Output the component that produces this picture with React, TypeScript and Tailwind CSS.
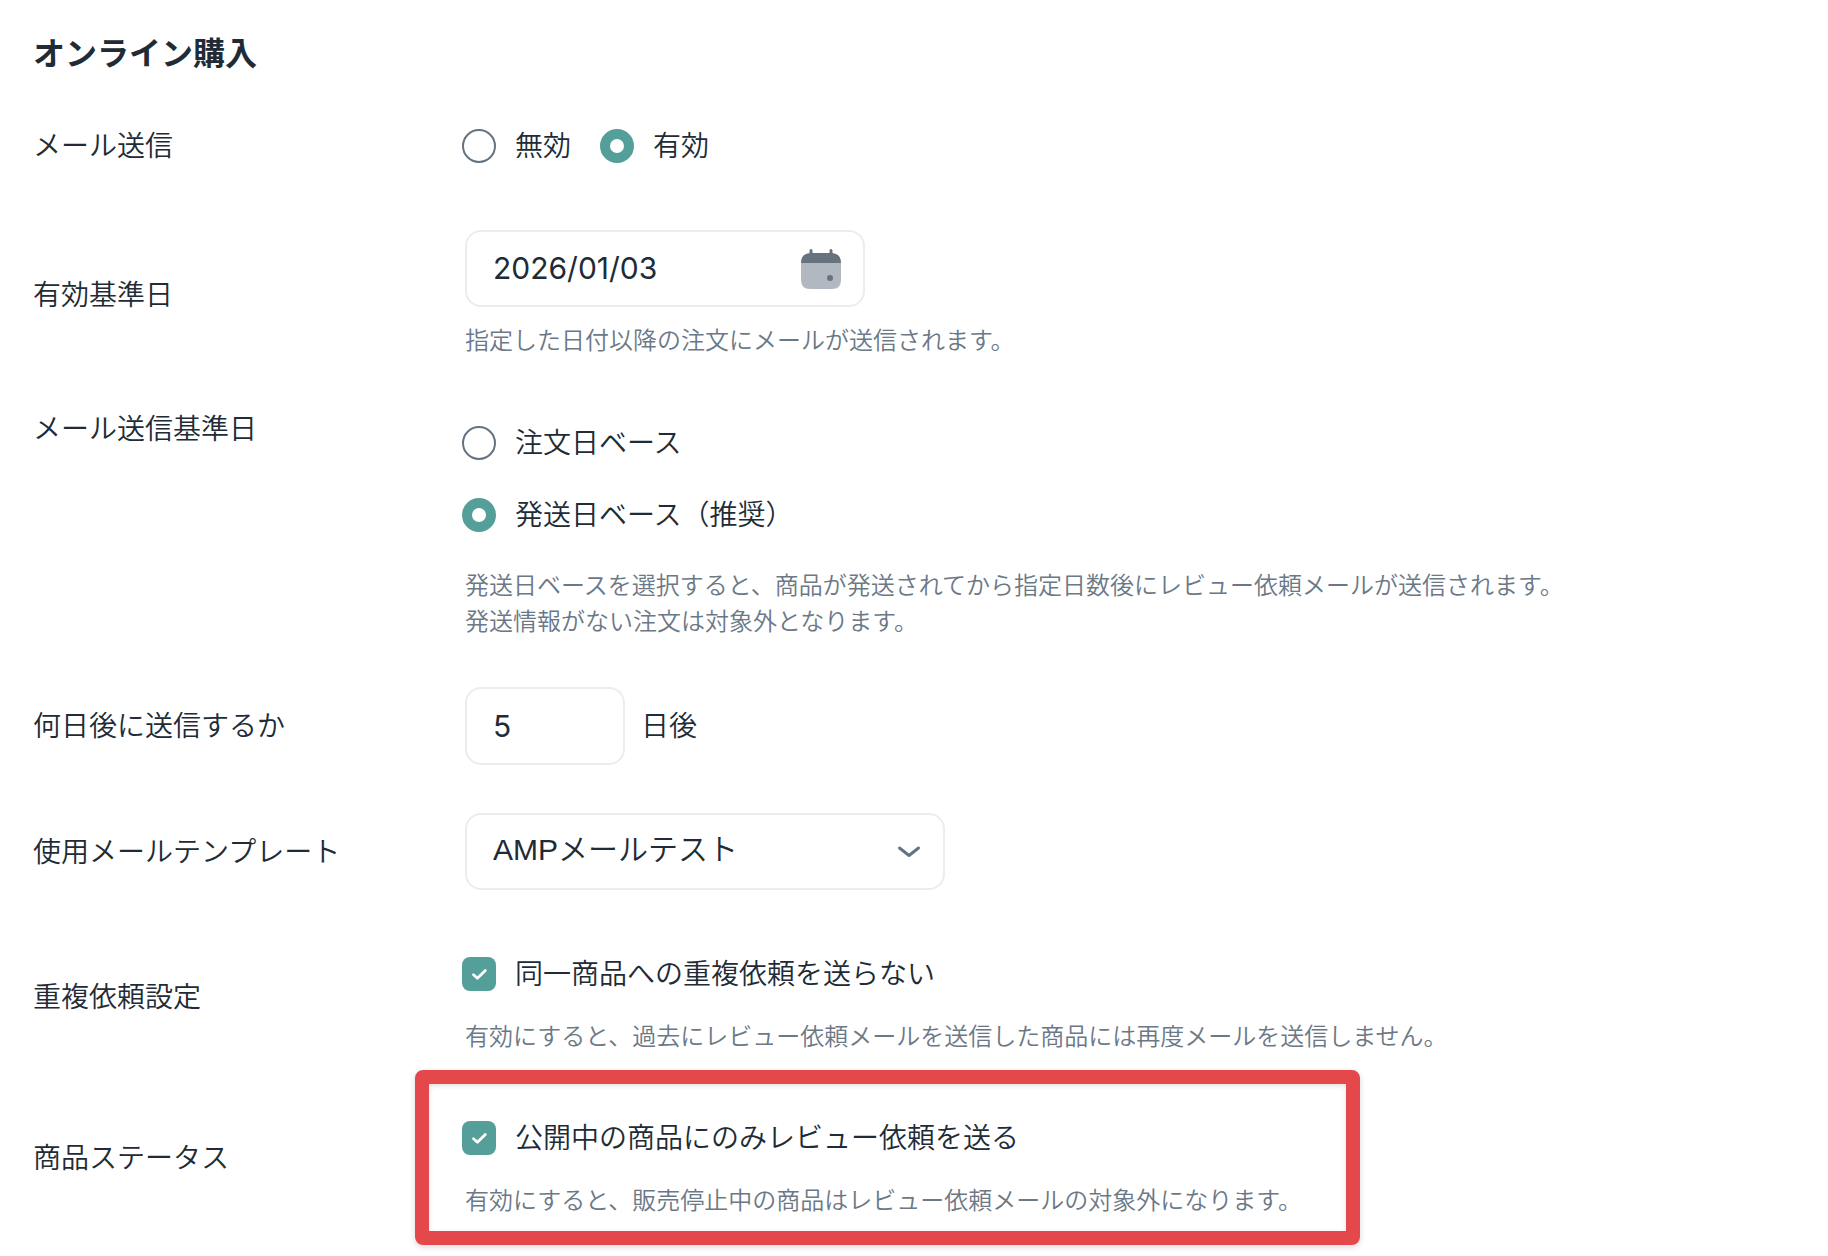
import { useState, type ReactNode } from 'react'

function Row({ label, htmlFor, className, children }: { label: string; htmlFor?: string; className?: string; children: ReactNode }) {
  return (
    <div className={`flex ${className ?? 'items-center'}`}>
      <div className="w-[432px] shrink-0">
        {htmlFor ? <label htmlFor={htmlFor}>{label}</label> : <span>{label}</span>}
      </div>
      <div className="min-w-0 flex-1">{children}</div>
    </div>
  )
}

type RadioProps = { name: string; label: string; checked: boolean; onChange: () => void }

function Radio({ name, label, checked, onChange }: RadioProps) {
  return (
    <label className="flex items-center gap-[19px]">
      <input
        type="radio"
        name={name}
        checked={checked}
        onChange={onChange}
        className="size-[34px] shrink-0 appearance-none rounded-full border-2 border-[#637381] bg-white checked:border-[10px] checked:border-[#549f99]"
      />
      {label}
    </label>
  )
}

function Checkbox({ label, defaultChecked }: { label: string; defaultChecked?: boolean }) {
  return (
    <label className="flex items-center gap-[19px]">
      <span className="grid size-[34px] shrink-0">
        <input
          type="checkbox"
          defaultChecked={defaultChecked}
          className="peer col-start-1 row-start-1 size-[34px] appearance-none rounded-lg border-2 border-[#637381] checked:border-0 checked:bg-[#549f99]"
        />
        <svg viewBox="0 0 34 34" fill="none" className="pointer-events-none invisible col-start-1 row-start-1 size-[34px] peer-checked:visible">
          <path d="M11.5 17.8 L15.4 21.3 L23.3 13.5" stroke="white" strokeWidth="2.8" strokeLinecap="round" strokeLinejoin="round" />
        </svg>
      </span>
      {label}
    </label>
  )
}

function Hint({ children }: { children: ReactNode }) {
  return <p className="text-2xl leading-9 text-[#6b7886]">{children}</p>
}

function CalendarIcon() {
  return (
    <svg viewBox="0 0 42 42" className="size-[42px]" aria-hidden="true">
      <path d="M1 15h40v17q0 9-9 9H10q-9 0-9-9z" fill="#b2b8bf" />
      <path d="M9.5 5V2.5a1.5 1.5 0 0 1 3 0V5h17V2.5a1.5 1.5 0 0 1 3 0V5.1Q41 6 41 15H1Q1 6 9.5 5.1z" fill="#66737f" />
      <circle cx="30" cy="30" r="3" fill="#66737f" />
    </svg>
  )
}

const fieldCls = 'rounded-2xl border-2 border-[#ebeded] bg-white text-[30px] text-[#212b36] outline-none'

export default function App() {
  const [mail, setMail] = useState('on')
  const [base, setBase] = useState('ship')
  const [date, setDate] = useState('2026/01/03')
  const [days, setDays] = useState('5')

  return (
    <main className="min-h-screen bg-white px-[33px] pt-[33px] pb-3 font-['Inter','Noto_Sans_CJK_JP',sans-serif] text-[28px] leading-[42px] font-[350] text-[#212b36]">
      <h1 className="text-[32px] leading-[42px] font-bold">オンライン購入</h1>

      <Row label="メール送信" className="mt-[50px] items-center">
        <div className="-ml-[3px] flex gap-[29px]">
          <Radio name="mail" label="無効" checked={mail === 'off'} onChange={() => setMail('off')} />
          <Radio name="mail" label="有効" checked={mail === 'on'} onChange={() => setMail('on')} />
        </div>
      </Row>

      <Row label="有効基準日" htmlFor="base-date" className="mt-[63px] items-center">
        <div className={`flex h-[77px] w-[400px] items-center pr-[21px] pl-[26px] ${fieldCls}`}>
          <input
            id="base-date"
            type="text"
            value={date}
            onChange={(e) => setDate(e.target.value)}
            className="min-w-0 flex-1 pb-0.5 font-normal outline-none"
          />
          <button type="button" aria-label="カレンダーを開く">
            <CalendarIcon />
          </button>
        </div>
        <div className="mt-4">
          <Hint>指定した日付以降の注文にメールが送信されます。</Hint>
        </div>
      </Row>

      <Row label="メール送信基準日" className="mt-[49px] items-start">
        <div className="mt-[14px] -ml-[3px] flex flex-col gap-[30px]">
          <Radio name="base" label="注文日ベース" checked={base === 'order'} onChange={() => setBase('order')} />
          <Radio name="base" label="発送日ベース（推奨）" checked={base === 'ship'} onChange={() => setBase('ship')} />
        </div>
        <div className="mt-[32px]">
          <Hint>
            発送日ベースを選択すると、商品が発送されてから指定日数後にレビュー依頼メールが送信されます。
            <br />
            発送情報がない注文は対象外となります。
          </Hint>
        </div>
      </Row>

      <Row label="何日後に送信するか" htmlFor="days" className="mt-[47px] items-center">
        <div className="flex items-center gap-4">
          <input
            id="days"
            type="text"
            inputMode="numeric"
            value={days}
            onChange={(e) => setDays(e.target.value)}
            className={`h-[78px] w-[160px] px-[26px] font-normal ${fieldCls}`}
          />
          <label htmlFor="days">日後</label>
        </div>
      </Row>

      <Row label="使用メールテンプレート" htmlFor="template" className="mt-[48px] items-center">
        <div className="grid w-[480px] items-center">
          <select
            id="template"
            className={`col-start-1 row-start-1 h-[77px] w-full appearance-none px-[26px] pb-1 font-['Liberation_Sans','Noto_Sans_CJK_JP',sans-serif] font-[350] ${fieldCls}`}
          >
            <option>AMPメールテスト</option>
          </select>
          <svg viewBox="0 0 24 14" fill="none" className="pointer-events-none col-start-1 row-start-1 mr-6 h-[14px] w-6 justify-self-end" aria-hidden="true">
            <path d="M2.5 3 L12 10.5 L21.5 3" stroke="#637381" strokeWidth="3" strokeLinecap="round" strokeLinejoin="round" />
          </svg>
        </div>
      </Row>

      <Row label="重複依頼設定" className="mt-[49px] items-center">
        <div className="-ml-[3px] pt-[14px]">
          <Checkbox label="同一商品への重複依頼を送らない" defaultChecked />
        </div>
        <div className="mt-6">
          <Hint>有効にすると、過去にレビュー依頼メールを送信した商品には再度メールを送信しません。</Hint>
        </div>
      </Row>

      <Row label="商品ステータス" className="mt-[15px] items-center">
        <div className="-ml-[50px] w-[945px] rounded-lg border-[14px] border-[#e5484b] pt-[33px] pr-4 pb-3 pl-[36px] shadow-[0_2px_6px_rgba(0,0,0,0.15),inset_0_2px_5px_rgba(0,0,0,0.12)]">
          <div className="-ml-[3px]">
            <Checkbox label="公開中の商品にのみレビュー依頼を送る" defaultChecked />
          </div>
          <div className="mt-6">
            <Hint>有効にすると、販売停止中の商品はレビュー依頼メールの対象外になります。</Hint>
          </div>
        </div>
      </Row>
    </main>
  )
}
